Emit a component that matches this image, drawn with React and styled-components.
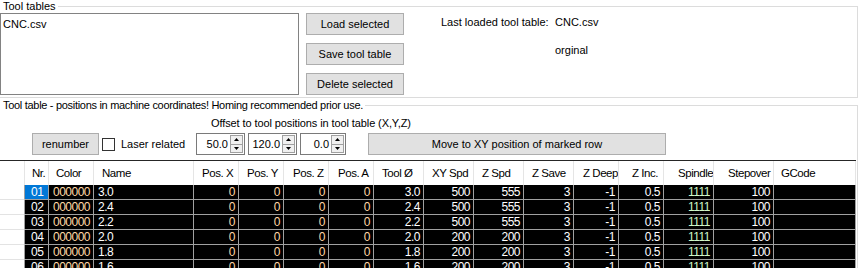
import React from 'react';
import styled, { createGlobalStyle } from 'styled-components';

const Global = createGlobalStyle`
  html, body { margin: 0; padding: 0; background: #fff; overflow: hidden; }
  body { font-family: "Liberation Sans", Arial, sans-serif; font-size: 11px; color: #000; }
  * { box-sizing: border-box; }
`;

const Page = styled.div`
  width: 863px;
  height: 268px;
  overflow: hidden;
`;

const Group = styled.fieldset`
  margin: ${(p) => p.$mt || 0}px 0 0 0;
  padding: 0 ${(p) => p.$pr || 0}px ${(p) => p.$pb || 0}px 0;
  border: 1px solid #dcdcdc;
  border-left: none;
  width: 858px;
  min-width: 0;
`;

const Legend = styled.legend`
  padding: 0 2px 0 3px;
  margin: 0;
  line-height: 13px;
  font-size: 11px;
  letter-spacing: ${(p) => p.$ls || 0}px;
`;

const TopRow = styled.div`
  display: flex;
  align-items: flex-start;
`;

const ListBox = styled.div`
  width: 299px;
  height: 82px;
  border: 1px solid #828282;
  padding: 3px 0 0 2px;
  line-height: 15px;
`;

const ButtonCol = styled.div`
  margin-left: 7px;
  width: 98px;
  display: flex;
  flex-direction: column;
  gap: 8px;
`;

const Button = styled.button`
  font-family: inherit;
  font-size: 11px;
  color: #000;
  background: #e1e1e1;
  border: 1px solid #adadad;
  border-radius: 0;
  height: 22px;
  width: ${(p) => p.$w || 98}px;
  padding: 0;
  margin: 0 0 0 ${(p) => p.$ml || 0}px;
  line-height: 20px;
  text-align: center;
`;

const Info = styled.div`
  margin: 3px 0 0 37px;
  display: grid;
  grid-template-columns: 114px auto;
  row-gap: 15px;
  line-height: 13px;
`;

const Body2 = styled.div`
  display: flex;
  flex-direction: column;
`;

const OffsetLabel = styled.div`
  margin: 5px 0 0 211px;
  line-height: 13px;
  letter-spacing: -0.1px;
`;

const Controls = styled.div`
  margin-top: 3px;
  height: 22px;
  display: flex;
  align-items: center;
  padding-left: 32px;
`;

const CheckLabel = styled.label`
  width: 94px;
  margin-left: 3px;
  display: flex;
  align-items: center;
`;

const CheckBox = styled.span`
  width: 13px;
  height: 13px;
  border: 1px solid #333;
  background: #fff;
  margin-right: 6px;
`;

const Numeric = styled.div`
  width: ${(p) => p.$w}px;
  height: 22px;
  margin-left: ${(p) => p.$ml || 0}px;
  border: 1px solid #7a7a7a;
  display: flex;
  align-items: stretch;
  padding: 1px;
`;

const NumValue = styled.div`
  flex: 1;
  text-align: right;
  padding-right: 2px;
  line-height: 18px;
`;

const Spin = styled.div`
  width: 13px;
  display: flex;
  flex-direction: column;
  border: 1px solid #a0a0a0;
`;

const SpinHalf = styled.div`
  flex: 1;
  display: flex;
  align-items: center;
  justify-content: center;
  background: #f0f0f0;
  & + & { border-top: 1px solid #a0a0a0; }
`;

const Arrow = ({ up }) => (
  <svg width="5" height="3" viewBox="0 0 5 3">
    <polygon points={up ? '2.5,0 5,3 0,3' : '0,0 5,0 2.5,3'} fill="#000" />
  </svg>
);

const columns = [
  { key: 'nr', title: 'Nr.', w: 24, hpl: 7, align: 'left', dp: 6 },
  { key: 'color', title: 'Color', w: 45, hpl: 7, align: 'left', dp: 4, c: '#ffd9a6' },
  { key: 'name', title: 'Name', w: 100, hpl: 8, align: 'left', dp: 4 },
  { key: 'px', title: 'Pos. X', w: 45, hpl: 8, c: '#ffd9a6' },
  { key: 'py', title: 'Pos. Y', w: 45, hpl: 8, c: '#ffd9a6' },
  { key: 'pz', title: 'Pos. Z', w: 45, hpl: 9, c: '#ffd9a6' },
  { key: 'pa', title: 'Pos. A', w: 45, hpl: 9, c: '#ffd9a6' },
  { key: 'tool', title: 'Tool Ø', w: 50, hpl: 8 },
  { key: 'xy', title: 'XY Spd', w: 50, hpl: 8 },
  { key: 'zs', title: 'Z Spd', w: 50, hpl: 8 },
  { key: 'zsave', title: 'Z Save', w: 50, hpl: 8 },
  { key: 'zdeep', title: 'Z Deep', w: 45, hpl: 9 },
  { key: 'zinc', title: 'Z Inc.', w: 45, hpl: 13 },
  { key: 'spindle', title: 'Spindle', w: 50, hpl: 14, c: '#cff7c8' },
  { key: 'step', title: 'Stepover', w: 60, hpl: 14 },
  { key: 'gcode', title: 'GCode', w: 82, hpl: 7, align: 'left', dp: 4 },
];

const mk = (nr, name, xy, zs) => ({
  nr, color: '000000', name, px: '0', py: '0', pz: '0', pa: '0', tool: name,
  xy, zs, zsave: '3', zdeep: '-1', zinc: '0.5', spindle: '1111', step: '100', gcode: '',
});

const rows = [
  mk('01', '3.0', '500', '555'),
  mk('02', '2.4', '500', '555'),
  mk('03', '2.2', '500', '555'),
  mk('04', '2.0', '200', '200'),
  mk('05', '1.8', '200', '200'),
  mk('06', '1.6', '200', '200'),
];

const Grid = styled.div`
  margin-top: 5px;
  width: 856px;
  border-top: 1px solid #262626;
  display: grid;
  grid-template-columns: 25px ${columns.map((c) => c.w + 'px').join(' ')};
`;

const Corner = styled.div`
  height: 24px;
  background: #fff;
  border-right: 1px solid #e5e5e5;
`;

const HeadCell = styled.div`
  height: 24px;
  background: #fff;
  border-right: 1px solid #e5e5e5;
  padding-left: ${(p) => p.$pl}px;
  display: flex;
  align-items: center;
  white-space: nowrap;
  overflow: hidden;
  font-size: 11.5px;
  letter-spacing: -0.45px;
`;

const RowHead = styled.div`
  height: 15px;
  background: #fff;
  border-right: 1px solid #a0a0a0;
  border-bottom: 1px solid #e3e3e3;
`;

const Cell = styled.div`
  height: 15px;
  background: ${(p) => (p.$sel ? '#0078d7' : '#000')};
  color: ${(p) => p.$color || '#fff'};
  border-right: 1px solid #a0a0a0;
  border-bottom: 1px solid #a0a0a0;
  text-align: ${(p) => p.$align};
  padding: ${(p) => (p.$align === 'left' ? `0 0 0 ${p.$dp}px` : '0 3px 0 0')};
  font-size: 12px;
  letter-spacing: -0.5px;
  line-height: 14px;
  white-space: nowrap;
  overflow: hidden;
`;

export default function App() {
  return (
    <Page>
      <Global />
      <Group $pb={2}>
        <Legend>Tool tables</Legend>
        <TopRow>
          <ListBox>CNC.csv</ListBox>
          <ButtonCol>
            <Button>Load selected</Button>
            <Button>Save tool table</Button>
            <Button>Delete selected</Button>
          </ButtonCol>
          <Info>
            <span>Last loaded tool table:</span>
            <span>CNC.csv</span>
            <span />
            <span>orginal</span>
          </Info>
        </TopRow>
      </Group>
      <Group $mt={1} $pr={1}>
        <Legend $ls={-0.3}>Tool table - positions in machine coordinates! Homing recommended prior use.</Legend>
        <Body2>
          <OffsetLabel>Offset to tool positions in tool table (X,Y,Z)</OffsetLabel>
          <Controls>
            <Button $w={67}>renumber</Button>
            <CheckLabel>
              <CheckBox />
              Laser related
            </CheckLabel>
            <Numeric $w={49}>
              <NumValue>50.0</NumValue>
              <Spin>
                <SpinHalf><Arrow up /></SpinHalf>
                <SpinHalf><Arrow /></SpinHalf>
              </Spin>
            </Numeric>
            <Numeric $w={49} $ml={3}>
              <NumValue>120.0</NumValue>
              <Spin>
                <SpinHalf><Arrow up /></SpinHalf>
                <SpinHalf><Arrow /></SpinHalf>
              </Spin>
            </Numeric>
            <Numeric $w={46} $ml={3}>
              <NumValue>0.0</NumValue>
              <Spin>
                <SpinHalf><Arrow up /></SpinHalf>
                <SpinHalf><Arrow /></SpinHalf>
              </Spin>
            </Numeric>
            <Button $w={298} $ml={22}>Move to XY position of marked row</Button>
          </Controls>
          <Grid>
            <Corner />
            {columns.map((c) => (
              <HeadCell key={c.key} $pl={c.hpl}>{c.title}</HeadCell>
            ))}
            {rows.map((r, i) => (
              <React.Fragment key={r.nr}>
                <RowHead />
                {columns.map((c) => (
                  <Cell
                    key={c.key}
                    $align={c.align || 'right'}
                    $dp={c.dp || 0}
                    $color={c.c}
                    $sel={i === 0 && c.key === 'nr'}
                  >
                    {r[c.key]}
                  </Cell>
                ))}
              </React.Fragment>
            ))}
          </Grid>
        </Body2>
      </Group>
    </Page>
  );
}
